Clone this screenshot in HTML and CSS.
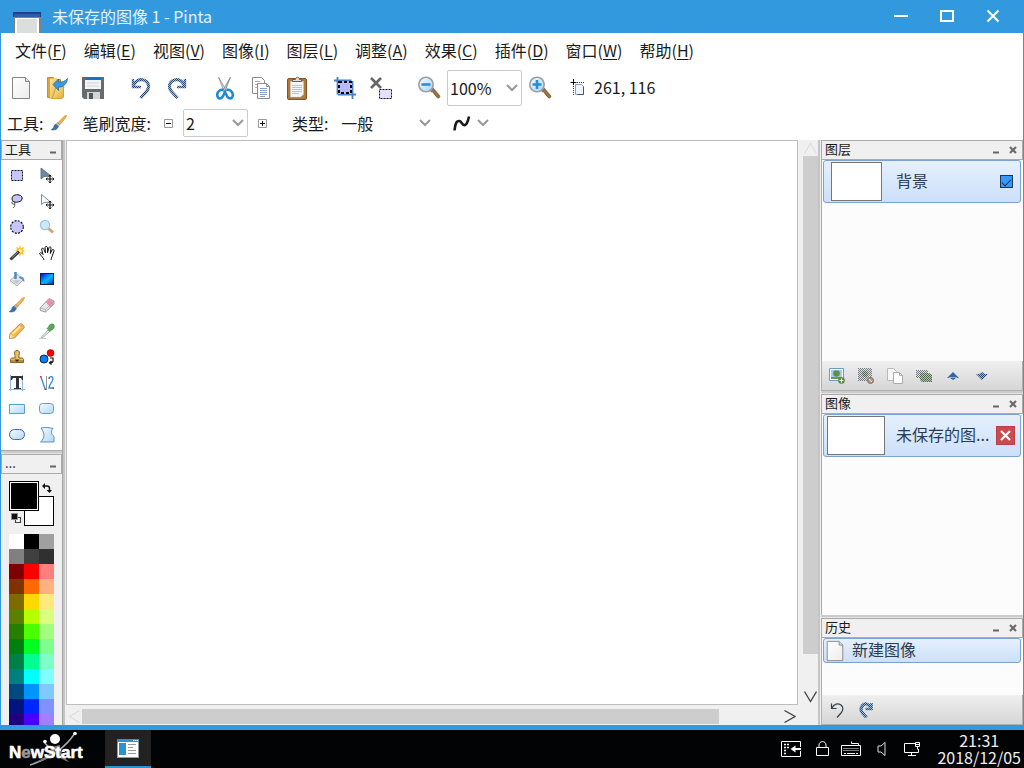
FILE: index.html
```html
<!DOCTYPE html>
<html lang="zh-CN">
<head>
<meta charset="utf-8">
<title>未保存的图像 1 - Pinta</title>
<link rel="stylesheet" href="styles.css">
</head>
<body>
<svg class="defs" width="0" height="0" aria-hidden="true">
  <defs>
    <pattern id="dither" width="2" height="2" patternUnits="userSpaceOnUse"><rect width="2" height="2" fill="#9db6d2"/><path d="M0 0h1v1h-1zM1 1h1v1h-1z" fill="#234a7a"/></pattern>
    <pattern id="ditherGreen" width="2" height="2" patternUnits="userSpaceOnUse"><rect width="2" height="2" fill="#b9c4b6"/><path d="M0 0h1v1h-1zM1 1h1v1h-1z" fill="#4e6a49"/></pattern>
    <pattern id="ditherGrey" width="2" height="2" patternUnits="userSpaceOnUse"><path d="M0 0h1v1h-1zM1 1h1v1h-1z" fill="#6b7680"/></pattern>
    <linearGradient id="gBlue" x1="0" y1="0" x2="1" y2="1"><stop offset="0" stop-color="#0000f0"/><stop offset=".5" stop-color="#00b4ff"/><stop offset=".65" stop-color="#00a0f8"/><stop offset="1" stop-color="#001890"/></linearGradient>
    <linearGradient id="gShape" x1="0" y1="0" x2="1" y2="1"><stop offset="0" stop-color="#f4faff"/><stop offset="1" stop-color="#b4d8f2"/></linearGradient>
    <linearGradient id="gFolder" x1="0" y1="0" x2="1" y2="1"><stop offset="0" stop-color="#fbe9a4"/><stop offset="1" stop-color="#e3ae35"/></linearGradient>
    <linearGradient id="gLens" x1="0" y1="0" x2="1" y2="1"><stop offset="0" stop-color="#f4fbff"/><stop offset="1" stop-color="#a9d6f6"/></linearGradient>
    <linearGradient id="gPage" x1="0" y1="0" x2="1" y2="1"><stop offset="0" stop-color="#ffffff"/><stop offset="1" stop-color="#ececec"/></linearGradient>
    <symbol id="page" viewBox="0 0 24 24"><path d="M3.500 1.500h13l4 4v17h-17z" fill="url(#gPage)" stroke="#858585"/><path d="M16.500 1.500v4h4" fill="#ddd" stroke="#858585"/></symbol>
    <symbol id="chevron" viewBox="0 0 12 8"><path d="M1 1l5 5 5-5" fill="none" stroke="#999" stroke-width="2"/></symbol>
    <symbol id="brush" viewBox="0 0 16 16"><path d="M15.500 .5l-2 .5-7 7 2 2 6-7z" fill="#f3b44d" stroke="#c88226" stroke-width=".6"/><path d="M6.500 7.500L4.800 9.400l2.200 2.200 1.700-2z" fill="#b8c2cc" stroke="#6c7a89" stroke-width=".5"/><path d="M5 9.200c-2 .3-2 2.200-2.500 3.400-.4 1-1.400 1.800-2.200 2.100 2.500.7 6 .2 7-3z" fill="#3d6faa" stroke="#244a78" stroke-width=".5"/></symbol>
    <symbol id="magnifier" viewBox="0 0 24 24"><path d="M14 14l2-2 6.500 7.500c1 1.500-.8 3.200-2.200 2.200z" fill="#a3713d" stroke="#6e4b29" stroke-width=".8"/><path d="M13.500 13.500l2 2" stroke="#777" stroke-width="2.500"/><circle cx="9" cy="8.500" r="7.200" fill="url(#gLens)" stroke="#9b9fa3" stroke-width="1.600"/></symbol>
    <symbol id="min" viewBox="0 0 6 3"><path d="M0 1.500h6" stroke="#666" stroke-width="2"/></symbol>
    <symbol id="close" viewBox="0 0 8 8"><path d="M1 1l6 6M7 1L1 7" stroke="#6a6a6a" stroke-width="2.200"/></symbol>
    <symbol id="undo" viewBox="0 0 20 22"><path d="M2 2v8h8" fill="none" stroke-width="2.400"/><path d="M2.500 8.500C5 3.500 9 1.800 13 3.200c5 2 6 7 2.500 11.300L9.500 21" fill="none" stroke-width="3"/></symbol>
    <symbol id="redo" viewBox="0 0 20 22"><path d="M18 2v8h-8" fill="none" stroke-width="2.400"/><path d="M17.500 8.500C15 3.500 11 1.800 7 3.200c-5 2-6 7-2.500 11.300l6 6.500" fill="none" stroke-width="3"/></symbol>
    <symbol id="plusMove" viewBox="0 0 8 8"><path d="M4 0v8M0 4h8" stroke="#111" stroke-width="1.200"/><path d="M2.600 1.500L4 0l1.400 1.500M2.600 6.500L4 8l1.400-1.500M1.500 2.600L0 4l1.500 1.400M6.500 2.600L8 4 6.500 5.400" fill="none" stroke="#111" stroke-width=".8"/></symbol>
  </defs>
</svg>

<header class="titlebar">
  <svg class="app-icon" width="28" height="21" viewBox="0 0 28 21"><path d="M0 0h28v21H0z" fill="#7d8489"/><path d="M0 0h28v5H0z" fill="#1e3f84"/><path d="M1 2h26v3H1z" fill="#2c5eb0"/><path d="M2 6h24v15H2z" fill="#fff"/><path d="M4 7h20v14H4z" fill="#dcdedb"/></svg>
  <h1 class="title">未保存的图像 1 - Pinta</h1>
  <div class="window-buttons">
    <button aria-label="最小化"><svg width="14" height="14" viewBox="0 0 14 14"><path d="M0 7h14" stroke="#fff" stroke-width="2"/></svg></button>
    <button aria-label="最大化"><svg width="14" height="14" viewBox="0 0 14 14"><path d="M1 2h12v10H1z" fill="none" stroke="#fff" stroke-width="2"/></svg></button>
    <button aria-label="关闭"><svg width="14" height="14" viewBox="0 0 14 14"><path d="M1.500 1.500l11 11M12.500 1.500l-11 11" stroke="#fff" stroke-width="2"/></svg></button>
  </div>
</header>

<div class="window">
  <nav class="menubar">
    <button>文件(<u>F</u>)</button><button>编辑(<u>E</u>)</button><button>视图(<u>V</u>)</button><button>图像(<u>I</u>)</button><button>图层(<u>L</u>)</button><button>调整(<u>A</u>)</button><button>效果(<u>C</u>)</button><button>插件(<u>D</u>)</button><button>窗口(<u>W</u>)</button><button>帮助(<u>H</u>)</button>
  </nav>

  <div class="toolbar">
    <button class="tb" aria-label="新建"><svg width="24" height="24"><use href="#page"/></svg></button>
    <button class="tb" aria-label="打开"><svg width="24" height="24" viewBox="0 0 24 24"><path d="M2.500 1.500h6l1 2h6v17l-6 2-7-1z" fill="#dba63a" stroke="#c79127"/><path d="M5 3l7-1v19l-7 1.500z" fill="url(#gFolder)"/><path d="M7 22.500l4-11 7.500-1.500v11l-1.500 1.500z" fill="url(#gFolder)" stroke="#d3a13a"/><path d="M8 8.500l5.500-5.500v3c3.500.5 6.500-.5 9-3.500-.5 5-4 9-9 8.500v3.500z" fill="#3c9be0" stroke="#1d68ad" stroke-width=".8"/></svg></button>
    <button class="tb" aria-label="保存"><svg width="24" height="24" viewBox="0 0 24 24"><path d="M1 1h22v22H3l-2-2z" fill="#696a6d"/><path d="M4 1h16v12H4z" fill="#f4f4f4"/><path d="M4 1h16v3H4z" fill="#1d6fc0"/><path d="M6 7h12M6 10h12" stroke="#d5d5d5"/><path d="M6 16h13v7H6z" fill="#d3d5d7"/><path d="M8 17h4v6H8z" fill="#55575a"/></svg></button>
    <span class="gap"></span>
    <button class="tb" aria-label="撤消"><svg width="20" height="22" stroke="url(#dither)"><use href="#undo"/></svg></button>
    <button class="tb" aria-label="重做"><svg width="20" height="22" stroke="url(#dither)"><use href="#redo"/></svg></button>
    <span class="gap"></span>
    <button class="tb" aria-label="剪切"><svg width="24" height="24" viewBox="0 0 24 24"><path d="M5.500 1l8 14-2 1.500z" fill="#e0e2e4" stroke="#8b9095" stroke-width=".8"/><path d="M17.500 1l-8 14 2 1.500z" fill="#c4c8cc" stroke="#7b8085" stroke-width=".8"/><path d="M10.500 14c-3-.8-6 1.200-6.300 4.500-.2 3 1.800 4.500 4 3.500 2-.9 2.500-3.500 3.800-6 1.300 2.500 1.800 5.100 3.800 6 2.200 1 4.200-.5 4-3.500-.3-3.300-3.300-5.300-6.300-4.500" fill="none" stroke="#1f8ad8" stroke-width="2.600"/></svg></button>
    <button class="tb" aria-label="复制"><svg width="24" height="24" viewBox="0 0 24 24"><path d="M3.500 1.500h9l3 3v13h-12z" fill="#fff" stroke="#8a8a8a"/><path d="M6 5.500h5M6 8.500h3M6 11.500h3" stroke="#aaa"/><path d="M8.500 7.500h9l3 3v12h-12z" fill="#fff" stroke="#8a8a8a"/><path d="M17.500 7.500v3h3" fill="none" stroke="#8a8a8a"/><path d="M11 12.500h7M11 14.500h7M11 16.500h7M11 18.500h7M11 20.500h5" stroke="#8a9cc8"/></svg></button>
    <button class="tb" aria-label="粘贴"><svg width="24" height="24" viewBox="0 0 24 24"><rect x="2.500" y="2.500" width="19" height="21" rx="1.500" fill="#b07a35" stroke="#815522"/><path d="M5.500 5.500h13v13l-3 2.500h-10z" fill="#f5f6f8" stroke="#d2cdc4" stroke-width=".5"/><path d="M7 9.500h10M7 11.500h10M7 13.500h10M7 15.500h10M7 17.500h7" stroke="#bdc2ca"/><path d="M7.500 5.500V3.500h3c0-3 4-3 4 0h2v2z" fill="#dadada" stroke="#636363"/></svg></button>
    <span class="gap"></span>
    <button class="tb" aria-label="裁剪"><svg width="24" height="24" viewBox="0 0 24 24"><path d="M4.500 1v17.500M1 4.500h17.500M19.500 5v18M5 18.500h18" fill="none" stroke="#4580c4" stroke-width="1.800"/><rect x="6" y="6" width="12" height="11" fill="#b9b9ff" stroke="#000" stroke-width="2" stroke-dasharray="3 2"/></svg></button>
    <button class="tb" aria-label="取消选择"><svg width="24" height="24" viewBox="0 0 24 24"><path d="M2 2l10 10M12 2L2 12" stroke="#666" stroke-width="2.600"/><rect x="10.500" y="13.500" width="12" height="9" fill="#e2e2ff" stroke="#111" stroke-dasharray="2 1"/></svg></button>
    <span class="gap"></span>
    <button class="tb" aria-label="缩小"><svg width="24" height="24" viewBox="0 0 24 24"><use href="#magnifier"/><path d="M4.500 8.500h9" stroke="#2290dd" stroke-width="2.600"/></svg></button>
    <span class="select zoom"><select aria-label="缩放"><option>100%</option></select><svg width="12" height="8"><use href="#chevron"/></svg></span>
    <button class="tb" aria-label="放大"><svg width="24" height="24" viewBox="0 0 24 24"><use href="#magnifier"/><path d="M4.500 8.500h9M9 4v9" stroke="#2290dd" stroke-width="2.600"/></svg></button>
    <div class="position"><svg width="18" height="18" viewBox="0 0 18 18"><path d="M4.500 1v6M1.500 4.500h6" stroke="#111"/><path d="M8 4.500h8M4.500 8v9" stroke="#333" stroke-dasharray="1 1"/><path d="M6.500 6.500h6l2 2v8h-8z" fill="#eef5fe" stroke="#8ba0bb"/><path d="M14.500 8.500v8h-6" fill="none" stroke="#37588a"/></svg><span>261, 116</span></div>
  </div>

  <div class="options">
    <span>工具:</span>
    <svg class="opt-brush" width="18" height="16"><use href="#brush"/></svg>
    <label for="brush-width">笔刷宽度:</label>
    <button class="step" aria-label="减小"><svg width="9" height="9" viewBox="0 0 9 9"><path d="M.5 .5h8v8h-8z" fill="#fff" stroke="#999"/><path d="M2 4.500h5" stroke="#111"/></svg></button>
    <span class="select width"><select id="brush-width"><option>2</option></select><svg width="12" height="8"><use href="#chevron"/></svg></span>
    <button class="step" aria-label="增大"><svg width="9" height="9" viewBox="0 0 9 9"><path d="M.5 .5h8v8h-8z" fill="#fff" stroke="#999"/><path d="M2 4.500h5M4.500 2v5" stroke="#111"/></svg></button>
    <label class="type-label" for="brush-type">类型:</label>
    <span class="select type"><select id="brush-type"><option>一般</option></select><svg width="12" height="8"><use href="#chevron"/></svg></span>
    <button class="curve" aria-label="抗锯齿"><svg width="18" height="18" viewBox="0 0 18 18"><path d="M1.500 16.500C2 9 4 6.500 6.500 7 9 7.500 9 12 12 11c2.500-.8 3-4 4-8.500" fill="none" stroke="#1a1a1a" stroke-width="2.600"/></svg><svg width="12" height="8"><use href="#chevron"/></svg></button>
  </div>

  <main class="workspace">
    <aside class="left">
      <div class="dock-head"><h2>工具</h2><button aria-label="最小化工具"><svg width="6" height="3"><use href="#min"/></svg></button></div>
      <div class="tools">
        <button aria-label="矩形选择"><svg width="16" height="16" viewBox="0 0 16 16"><rect x="2.500" y="3.500" width="11" height="10" fill="#c5c5ff" stroke="#111" stroke-dasharray="2 1"/></svg></button>
        <button aria-label="移动所选像素"><svg width="16" height="16" viewBox="0 0 16 16"><path d="M2 1v11l3-2.500 7-.5z" fill="#6f88a5" stroke="#4d6580" stroke-width=".8"/><svg x="7" y="8" width="8" height="8"><use href="#plusMove"/></svg></svg></button>
        <button aria-label="套索选择"><svg width="16" height="16" viewBox="0 0 16 16"><path d="M5 9C2 7 2.500 3 6 2c4-1 8 1 7 4-.5 3-5 3.500-8 3z" fill="#c5c5ff" stroke="#111"/><path d="M5 8.500c-2-.5-3 2-1 2.500s3-1.500 1-2.500M5.500 11c1 2-.5 3-1.500 4" fill="none" stroke="#444"/></svg></button>
        <button aria-label="移动选区"><svg width="16" height="16" viewBox="0 0 16 16"><path d="M2.500 1.500v10l2.500-2 6.500-.5z" fill="#fff" stroke="#7d8fa6"/><svg x="7" y="8" width="8" height="8"><use href="#plusMove"/></svg></svg></button>
        <button aria-label="椭圆选择"><svg width="16" height="16" viewBox="0 0 16 16"><circle cx="8" cy="8" r="6.300" fill="#c5c5ff" stroke="#111" stroke-width="1.200" stroke-dasharray="2 1.300"/></svg></button>
        <button aria-label="缩放工具"><svg width="16" height="16" viewBox="0 0 16 16"><path d="M9.500 9.500l4.500 4" stroke="#d3a56b" stroke-width="3"/><circle cx="6" cy="6" r="4.600" fill="#cbe7fa" stroke="#9fc3dc" stroke-width="1.200"/></svg></button>
        <button aria-label="魔术棒"><svg width="16" height="16" viewBox="0 0 16 16"><path d="M11 0l1 3 3-1-1 3 2 1-2 1 1 3-3-1-1 3-1-3-3 1 1-3-2-1 2-1-1-3 3 1z" fill="#fbc431"/><circle cx="11" cy="6" r="1.800" fill="#fff4b0"/><path d="M1.500 14.500L10 6.500" stroke="#3b3b3b" stroke-width="3"/><path d="M3 12.500l6-5.500" stroke="#999"/></svg></button>
        <button aria-label="平移"><svg width="16" height="16" viewBox="0 0 16 16"><path d="M5 15c0-2-3-4-4.500-6.500C1.500 7 3 8 4 9.500L2.500 4C3.500 2.500 4.500 3 5 4.500L6.500 8 6 2.500c.5-1.500 2-1.500 2.500 0V8l1.500-5.500c.5-1.200 2-.8 2 .5l-.7 5.500L13 5c1-1 2.500-.2 2 1l-2 5.500c-.5 1.500-1 2.500-1 3.500" fill="#fff" stroke="#111"/></svg></button>
        <button aria-label="油漆桶"><svg width="16" height="16" viewBox="0 0 16 16"><path d="M8 3l6.500 5.500L8 15 1 9.500z" fill="#e3e5e7" stroke="#979da3" stroke-width=".8"/><path d="M9.500 6c3-1.500 6 0 6 5-2-.5-1.500-3-4-3z" fill="#5c93c8"/><path d="M6.500 1v7" stroke="#4d88c2" stroke-width="2.500"/><path d="M3 9.500L8 13l3.500-4" fill="#c3c7cb"/></svg></button>
        <button aria-label="渐变"><svg width="16" height="16" viewBox="0 0 16 16"><rect x="1.500" y="2.500" width="13" height="11" fill="url(#gBlue)" stroke="#16232e"/></svg></button>
        <button aria-label="画笔"><svg width="16" height="16"><use href="#brush"/></svg></button>
        <button aria-label="橡皮擦"><svg width="16" height="16" viewBox="0 0 16 16"><path d="M1 11l9-9.500 5 2.500v3l-8.500 8-5-1.500z" fill="#e7e7e9" stroke="#87878c" stroke-width=".8"/><path d="M6.500 5l3.500-3.500 5 2.500v3l-3.500 3.500z" fill="#e795a6"/><path d="M1 11l5.500 1.500L15 4M6.500 12.500v2.500" fill="none" stroke="#999" stroke-width=".6"/></svg></button>
        <button aria-label="铅笔"><svg width="16" height="16" viewBox="0 0 16 16"><path d="M.5 15.500l.5-5L11 1c2-1 5 2 4 4L5.500 15z" fill="#f2b843" stroke="#a87824" stroke-width=".7"/><path d="M3.500 11L12 3" stroke="#fde69a" stroke-width="2"/><path d="M1.500 11l3.500 3-4 1z" fill="#f6e1bd"/><path d="M11.500 1.200l3.500 3.500-1.500 1.300-3.500-3.500z" fill="#e8b28a"/></svg></button>
        <button aria-label="取色器"><svg width="16" height="16" viewBox="0 0 16 16"><path d="M2 14.500L9 7l1.500 1.500L4 14.500z" fill="#ddeee8" stroke="#95a5a4" stroke-width=".8"/><path d="M8 5.500l3 3 1.500-1.500c4-1 3-6.500 1-6-3 0-3 1-4 3z" fill="#5ea853" stroke="#39793b" stroke-width=".6"/><path d="M0 15.500h7" stroke="#ccc"/></svg></button>
        <button aria-label="克隆图章"><svg width="16" height="16" viewBox="0 0 16 16"><path d="M6 6.500C5 3 5.500 1.500 8 1.500S11 3 10 6.500V9h3.500l1 1.500v3h-13v-3L2.500 9H6z" fill="#e6bd62" stroke="#896323"/><path d="M2 12h12" stroke="#896323"/><path d="M5.500 10.500h5L8 13z" fill="#3d2c12"/></svg></button>
        <button aria-label="重新着色"><svg width="16" height="16" viewBox="0 0 16 16"><circle cx="11.500" cy="4" r="3.500" fill="#f00" stroke="#700" stroke-width=".5"/><circle cx="5" cy="10" r="4" fill="#0a80ff" stroke="#06254a"/><path d="M14 8.500v4c-.5 1.500-1.500 1.500-3.500 1.500m2-2l-2 2 2 1.500M11 9h3" fill="none" stroke="#111" stroke-width="1.200"/></svg></button>
        <button aria-label="文本"><svg width="16" height="16" viewBox="0 0 16 16"><path d="M1.500 0v16M13.500 0v16M0 14.500h16" stroke="#8db8e1"/><path d="M2 1h12v4h-1l-1-2h-2v10h2v1H5v-1h2V3H4L3 5H2z" fill="#333"/></svg></button>
        <button aria-label="直线/曲线"><svg width="16" height="16" viewBox="0 0 16 16"><path d="M2 2l4 12" stroke="#2c8be0" stroke-width="1.300"/><path d="M7.500 1v14" stroke="#777" stroke-width=".8"/><path d="M10 3c1-2 4-1.500 4 .5 0 3-4 6-4 9.500h5" fill="none" stroke="#2c8be0" stroke-width="1.300"/><path d="M1 1h1.500v1.500H1zM5.500 13.500H7V15H5.500zM9.500 2.500H11V4H9.500zM13.500 12.500H15V14h-1.500z" fill="#e22"/></svg></button>
        <button aria-label="矩形"><svg width="16" height="16" viewBox="0 0 16 16"><path d="M.5 3.500h15v9H.5z" fill="url(#gShape)" stroke="#609cc9"/></svg></button>
        <button aria-label="圆角矩形"><svg width="16" height="16" viewBox="0 0 16 16"><rect x=".5" y="2.500" width="14" height="10" rx="3" fill="url(#gShape)" stroke="#609cc9"/></svg></button>
        <button aria-label="椭圆"><svg width="16" height="16" viewBox="0 0 16 16"><rect x=".5" y="2.500" width="15" height="10" rx="5" fill="url(#gShape)" stroke="#3c68a6"/></svg></button>
        <button aria-label="任意形状"><svg width="16" height="16" viewBox="0 0 16 16"><path d="M2 1c4-.8 9-.5 12 .5-2.500 3-2 5.500 1 8v5.500H1.500C6 11 6 6.500 2 1z" fill="url(#gShape)" stroke="#5a8fc2"/></svg></button>
      </div>
      <div class="splitter"></div>
      <div class="dock-head palette-head"><h2>...</h2><button aria-label="最小化调色板"><svg width="6" height="3"><use href="#min"/></svg></button></div>
      <div class="palette">
        <div class="current">
          <button class="secondary" aria-label="次要颜色"></button>
          <button class="primary" aria-label="主要颜色"></button>
          <button class="swap" aria-label="交换颜色"><svg width="10" height="10" viewBox="0 0 10 10"><path d="M1 3h4q2.500 0 2.500 2.500V9" fill="none" stroke="#111" stroke-width="1.500"/><path d="M0 3l3-3v6zM4.500 7h5.500L7.500 10z" fill="#111"/></svg></button>
          <button class="reset" aria-label="重置颜色"><svg width="11" height="11" viewBox="0 0 11 11"><path d="M4.500 4.500h5v5h-5z" fill="#fff" stroke="#444" stroke-width="1.200"/><path d="M.5 .5h6v6h-6z" fill="#111" stroke="#888"/></svg></button>
        </div>
        <div class="swatches" id="swatches"></div>
      </div>
    </aside>
    <div class="vsplit"></div>
    <section class="canvas-area" aria-label="画布">
      <div class="canvas"></div>
      <div class="vscroll"><svg width="13" height="12" viewBox="0 0 13 12"><path d="M.5 11.500l6-10 6 10" fill="none" stroke="#ddd" stroke-width="1.200"/></svg><div class="thumb"></div><svg width="13" height="12" viewBox="0 0 13 12"><path d="M.5 .5l6 10 6-10" fill="none" stroke="#444" stroke-width="1.300"/></svg></div>
      <div class="hscroll"><svg width="12" height="13" viewBox="0 0 12 13"><path d="M11.500 .5l-10 6 10 6" fill="none" stroke="#ddd" stroke-width="1.200"/></svg><div class="thumb"></div><svg width="12" height="13" viewBox="0 0 12 13"><path d="M.5 .5l10.500 6-10.500 6" fill="none" stroke="#444" stroke-width="1.300"/></svg></div>
    </section>
    <div class="vsplit"></div>
    <aside class="right">
      <section class="pad layers">
        <div class="dock-head"><h2>图层</h2><button aria-label="最小化图层"><svg width="6" height="3"><use href="#min"/></svg></button><button aria-label="关闭图层"><svg width="8" height="8"><use href="#close"/></svg></button></div>
        <div class="list">
          <label class="row big"><span class="thumbnail layer-thumb"></span><span class="name">背景</span><input class="check" type="checkbox" checked></label>
        </div>
        <div class="pad-bar">
          <button aria-label="添加图层"><svg width="16" height="16" viewBox="0 0 16 16"><path d="M.5 .5h14v12H.5z" fill="#fff" stroke="#6b9bc8"/><path d="M2 2h11v9H2z" fill="#a8c9ea"/><circle cx="7.500" cy="5.500" r="3.300" fill="#579443"/><path d="M2 9h11v2H2z" fill="#709c4a"/><circle cx="12.500" cy="12.500" r="3.300" fill="#4b8e33"/><path d="M12.500 10.500v4M10.500 12.500h4" stroke="#fff" stroke-width="1.200"/></svg></button>
          <button aria-label="删除图层"><svg width="16" height="16" viewBox="0 0 16 16"><path d="M0 0h14v13H0z" fill="url(#ditherGrey)"/><circle cx="7" cy="6" r="3" fill="url(#ditherGreen)"/><circle cx="12.500" cy="12.500" r="3" fill="#b39b8b" stroke="#866b5b"/><path d="M11 11l3 3" stroke="#eee"/></svg></button>
          <button aria-label="复制图层"><svg width="16" height="16" viewBox="0 0 16 16"><path d="M.5 .5h6l3 3v9h-9z" fill="#f7f7f7" stroke="#b8b8b8"/><path d="M6.500 4.500h6l3 3v8h-9z" fill="#fdfdfd" stroke="#aaa"/><path d="M12.500 4.500v3h3" fill="none" stroke="#aaa"/></svg></button>
          <button aria-label="向下合并"><svg width="16" height="16" viewBox="0 0 16 16"><path d="M0 2h12v8H0z" fill="url(#ditherGrey)"/><path d="M4 5h9l3 2v7H6l-2-2z" fill="url(#ditherGreen)"/></svg></button>
          <button aria-label="上移图层"><svg width="12" height="8" viewBox="0 0 12 8"><path d="M0 6l6-6 6 6H9L6 8 3 6z" fill="#34659c"/><path d="M2 5.500h8" stroke="#8cb2d8"/></svg></button>
          <button aria-label="下移图层"><svg width="12" height="8" viewBox="0 0 12 8"><path d="M0 2h3l3-2 3 2h3L6 8z" fill="url(#dither)"/></svg></button>
        </div>
      </section>
      <div class="splitter"></div>
      <section class="pad images">
        <div class="dock-head"><h2>图像</h2><button aria-label="最小化图像"><svg width="6" height="3"><use href="#min"/></svg></button><button aria-label="关闭图像面板"><svg width="8" height="8"><use href="#close"/></svg></button></div>
        <div class="list">
          <div class="row big"><span class="thumbnail image-thumb"></span><span class="name">未保存的图...</span><button class="close-image" aria-label="关闭图像"><svg width="11" height="11" viewBox="0 0 11 11"><path d="M1 1l9 9M10 1l-9 9" stroke="#fff" stroke-width="2.200"/></svg></button></div>
        </div>
      </section>
      <div class="splitter"></div>
      <section class="pad history">
        <div class="dock-head"><h2>历史</h2><button aria-label="最小化历史"><svg width="6" height="3"><use href="#min"/></svg></button><button aria-label="关闭历史"><svg width="8" height="8"><use href="#close"/></svg></button></div>
        <div class="list">
          <div class="row small"><svg width="22" height="22"><use href="#page"/></svg><span class="name">新建图像</span></div>
        </div>
        <div class="pad-bar history-bar">
          <button aria-label="撤消历史"><svg width="14" height="16" viewBox="0 0 14 16"><path d="M1.500 1.500v5h5M2 6C4 1.500 8 1 11 3c2.500 2 2.500 5 0 8l-4 4.500" fill="none" stroke="#3c3f42" stroke-width="1.200"/></svg></button>
          <button aria-label="重做历史"><svg width="14" height="16" viewBox="0 0 14 16" fill="none" stroke="url(#dither)"><path d="M12.500 1v6h-6" stroke-width="2.500"/><path d="M11.500 5C9 1.500 6 1 3.500 3.500c-2 2.500-2 5 0 7.500l4 4.500" stroke-width="3.200"/></svg></button>
        </div>
      </section>
    </aside>
  </main>
</div>

<footer class="taskbar">
  <button class="start" aria-label="开始"><svg width="84" height="38" viewBox="0 0 84 38"><path d="M30 35C48 29 64 20 75 3M44 12c4 5 8 8 13 8" fill="none" stroke="#aaa" stroke-width="1.500"/><path d="M36 32c12-6 15-9 15-15l9-2c0 6 2 10 9 17-8-3-12-6-14-9-5 5-11 8-19 9z" fill="#777"/><circle cx="55" cy="9" r="5" fill="#fff"/><circle cx="75" cy="3.500" r="1.800" fill="#fff"/><circle cx="45" cy="11.500" r="1.800" fill="#fff"/><text class="logo-text" x="9" y="28">N<tspan class="logo-dim">e</tspan>wStart</text></svg></button>
  <button class="task" aria-label="Pinta"><svg width="22" height="19" viewBox="0 0 22 19"><path d="M0 0h22v19H0z" fill="#999"/><path d="M1 3h20v15H1z" fill="#fff"/><path d="M0 0h22v3H0z" fill="#2a93d1"/><path d="M16 1.500h1.500M18 1.500h1.500M20 1.500h1" stroke="#fff"/><path d="M2 4h7v12H2z" fill="#2a93d1"/><path d="M11 5.500h8M11 8.500h5M11 11.500h8M11 14.500h8" stroke="#999"/></svg></button>
  <div class="tray">
    <button aria-label="输入法"><svg width="20" height="16" viewBox="0 0 20 16"><path d="M19.500 6V.5H.5v15h19V10" fill="none" stroke="#fff"/><path d="M3 3.500h2M6 3.500h2M3 6.500h2M6 6.500h2M3 9.500h2M3 12.500h2" stroke="#fff" stroke-width="1.500"/><path d="M20 8h-8" stroke="#fff" stroke-width="2"/><path d="M9.500 8l5-3.500v7z" fill="#fff"/></svg></button>
    <button aria-label="锁定"><svg width="13" height="16" viewBox="0 0 13 16"><path d="M.5 6.500h12v8H.5zM3 6V4c0-4.500 7-4.500 7 0v2" fill="none" stroke="#fff"/></svg></button>
    <button aria-label="键盘"><svg width="20" height="16" viewBox="0 0 20 16"><path d="M.5 4.500h19v10H.5zM17.500 4.500V2.500h-7V.5" fill="none" stroke="#fff"/><path d="M2.500 7.500h15M2.500 9.500h15" stroke="#fff" stroke-dasharray="1 1"/><path d="M3 12.500h2M6 12.500h8M15 12.500h2" stroke="#fff"/></svg></button>
    <button aria-label="音量"><svg width="9" height="16" viewBox="0 0 9 16"><path d="M8 1.500v13l-4-3.500H1V5h3z" fill="none" stroke="#ddd"/></svg></button>
    <button aria-label="网络"><svg width="17" height="16" viewBox="0 0 17 16"><path d="M11 2.500H.5v9h14V8M7.500 11.500v3M4 14.500h8" fill="none" stroke="#fff"/><path d="M11.500 1.500h4v4h-4zM13.500 5.500v3M11.500 3.500h4" fill="none" stroke="#fff"/></svg></button>
    <div class="clock"><time>21:31</time><time>2018/12/05</time></div>
  </div>
</footer>
<script src="palette.js"></script>
</body>
</html>
```
FILE: palette.js
```js
const colors = [
  'ffffff', '000000', 'a0a0a0', '808080', '404040', '303030',
  '7f0000', 'ff0000', 'ff7f7f', '7f3300', 'ff6a00', 'ffb27f',
  '7f6a00', 'ffd800', 'ffe97f', '5b7f00', 'b6ff00', 'daff7f',
  '267f00', '4cff00', 'a5ff7f', '007f0e', '00ff21', '7fff8e',
  '007f46', '00ff90', '7fffc5', '007f7f', '00ffff', '7fffff',
  '004a7f', '0094ff', '7fc9ff', '00137f', '0026ff', '7f92ff',
  '21007f', '4800ff', 'a17fff'
];
const holder = document.getElementById('swatches');
for (const c of colors) {
  const b = document.createElement('button');
  b.style.backgroundColor = '#' + c;
  b.setAttribute('aria-label', '#' + c);
  holder.append(b);
}
```
FILE: styles.css
```css
* { box-sizing: border-box; }
body {
  margin: 0;
  height: 100vh;
  display: flex;
  flex-direction: column;
  overflow: hidden;
  background: #3399df;
  color: #1a1a1a;
  font: 16px/24px "Noto Sans CJK SC", "Noto Sans", sans-serif;
}
button, select {
  font: inherit;
  color: inherit;
  background: none;
  border: 0;
  padding: 0;
  margin: 0;
}
button { display: flex; align-items: center; justify-content: center; }
svg { flex: none; display: block; }
h1, h2 { margin: 0; font-weight: 400; }
.defs { position: absolute; }

.titlebar { display: flex; align-items: center; height: 33px; flex: none; padding-left: 13px; }
.app-icon { align-self: flex-end; }
.title { flex: 1; padding: 0 0 2px 11px; font-size: 16px; color: #e4f2fd; }
.window-buttons { display: flex; padding: 0 8px 2px 0; }
.window-buttons button { width: 46px; height: 30px; }

.window {
  flex: 1;
  min-height: 0;
  display: flex;
  flex-direction: column;
  background: #fff;
  border: solid #3399df;
  border-width: 0 1px 5px;
}
.menubar { display: flex; height: 36px; flex: none; padding-left: 5px; }
.menubar button { padding: 0 8px 2px 9px; display: block; }
.menubar u { text-underline-offset: 2px; }
.toolbar { display: flex; align-items: center; height: 37px; flex: none; padding-left: 2px; }
.tb { width: 36px; height: 36px; }
.gap { width: 12px; }

.select { display: flex; align-items: center; position: relative; border: 1px solid #c8ccd2; border-radius: 2px; background: #fff; }
.select select { flex: 1; height: 100%; padding: 0 2px; appearance: none; }
.select svg { position: absolute; right: 3px; pointer-events: none; }
.zoom { width: 75px; height: 36px; }
.width { width: 65px; height: 28px; }
.type { width: 97px; height: 28px; border-color: transparent; }
.position { display: flex; align-items: center; gap: 7px; padding: 0 0 2px 11px; }

.options { display: flex; align-items: center; height: 34px; flex: none; padding-left: 6px; }
.opt-brush { margin: 0 14px 0 7px; }
.step { width: 15px; height: 28px; margin: 0 7px 0 10px; }
.width + .step { margin-left: 7px; }
.type-label { margin: 0 10px 0 15px; }
.curve { gap: 6px; margin-left: 18px; }

.workspace { flex: 1; min-height: 0; display: flex; background: #f0f0f0; }
.left { width: 62px; display: flex; flex-direction: column; border-right: 1px solid #a6a6a6; }
.dock-head {
  display: flex;
  align-items: center;
  flex: none;
  height: 20px;
  gap: 10px;
  padding: 0 5px 0 3px;
  border: 1px solid #ababab;
  background: #f0f0f0;
  color: #1a1a1a;
}
.dock-head h2 { flex: 1; font-size: 13px; line-height: 16px; padding-bottom: 2px; }
.dock-head button { height: 18px; }
.dock-head button:nth-of-type(1) { padding-top: 5px; }
.tools {
  display: grid;
  grid-template-columns: 30px 30px;
  grid-auto-rows: 26px;
  padding: 2px 0 2px 1px;
  background: #fff;
  border-bottom: 1px solid #ababab;
}
.splitter { flex: none; height: 3px; background: #cbcbcb; border-bottom: 1px solid #e4e4e4; }
.palette { flex: 1; min-height: 0; overflow: hidden; padding: 7px 0 0 8px; }
.current { position: relative; width: 46px; height: 53px; }
.current button { position: absolute; }
.primary, .secondary { width: 30px; height: 30px; border: 1px solid #000; }
.primary { left: 0; top: 0; background: #000; box-shadow: inset 0 0 0 1px #fff; }
.secondary { left: 15px; top: 15px; background: #fff; }
.swap { right: 3px; top: 2px; }
.reset { left: 2px; top: 32px; }
.swatches { display: grid; grid-template-columns: repeat(3, 15px); grid-auto-rows: 15px; }

.vsplit { width: 3px; flex: none; background: #c4c4c4; border-right: 1px solid #f0f0f0; }
.canvas-area { flex: 1; min-width: 0; display: grid; grid-template: minmax(0, 1fr) 20px / minmax(0, 1fr) 20px; }
.canvas { background: #fff; border: 1px solid #bdbdbd; }
.vscroll, .hscroll { display: flex; align-items: center; justify-content: space-between; }
.vscroll { flex-direction: column; margin-left: 4px; padding: 2px 0 2px; gap: 2px; }
.hscroll { margin: 4px 0 1px; padding: 0 2px; gap: 2px; }
.thumb { background: #cdcdcd; }
.vscroll .thumb { width: 15px; flex: 0 1 498px; margin-bottom: auto; }
.hscroll .thumb { height: 15px; flex: 0 1 637px; margin-right: auto; }

.right { width: 202px; flex: none; display: flex; flex-direction: column; }
.pad { display: flex; flex-direction: column; min-height: 0; }
.layers { flex: 251 1 0; }
.images { flex: 221 1 0; }
.history { flex: 107 1 0; }
.list { flex: 1; min-height: 0; background: #fcfcfc; border-left: 1px solid #ababab; padding: 0 2px 0 1px; }
.row {
  display: flex;
  align-items: center;
  color: #2b3b50;
  border: 1px solid #7da2d0;
  border-radius: 3px;
  background: linear-gradient(#e5f0fc, #cce0fb);
}
.big { height: 43px; padding-right: 5px; }
.small { height: 25px; gap: 6px; }
.row .name { flex: 1; white-space: nowrap; padding-bottom: 3px; }
.thumbnail { height: 39px; background: #fff; border: 1px solid #777; }
.layer-thumb { width: 51px; margin: 0 14px 0 7px; }
.image-thumb { width: 58px; margin: 0 11px 0 3px; }
.check {
  appearance: none;
  width: 13px;
  height: 13px;
  margin: 0 2px 0 0;
  border: 1px solid #20354f;
  background: #3399fa;
  display: grid;
  place-items: center;
}
.check:checked::before { content: ""; width: 8px; height: 4px; border: solid #14304f; border-width: 0 0 1px 1px; transform: rotate(-45deg); }
.close-image { width: 19px; height: 19px; background: #c94a4f; border: 1px solid #b94044; }
.pad-bar {
  display: flex;
  align-items: center;
  flex: none;
  height: 30px;
  border: solid #b0b0b0;
  border-width: 0 1px 1px;
  background: linear-gradient(#efefef, #d6d6d6);
}
.pad-bar button { width: 29px; height: 29px; }

.taskbar { display: flex; flex: none; height: 38px; background: #020305; color: #fff; }
.start { padding-right: 21px; }
.logo-text { font: bold 17px "Liberation Sans", sans-serif; fill: #fff; stroke: #fff; stroke-width: 0.6px; }
.logo-dim { fill: #999; stroke: #999; }
.task { width: 46px; background: #222; border-bottom: 2px solid #2a93d1; }
.tray { display: flex; align-items: center; margin-left: auto; padding-right: 3px; }
.tray button { margin-right: 16px; }
.tray button:nth-of-type(1) { margin-right: 15px; }
.tray button:nth-of-type(2) { margin-right: 12px; }
.tray button:nth-of-type(4) { margin-right: 18px; }
.clock { display: flex; flex-direction: column; align-items: center; line-height: 17px; color: #eee; }
```
